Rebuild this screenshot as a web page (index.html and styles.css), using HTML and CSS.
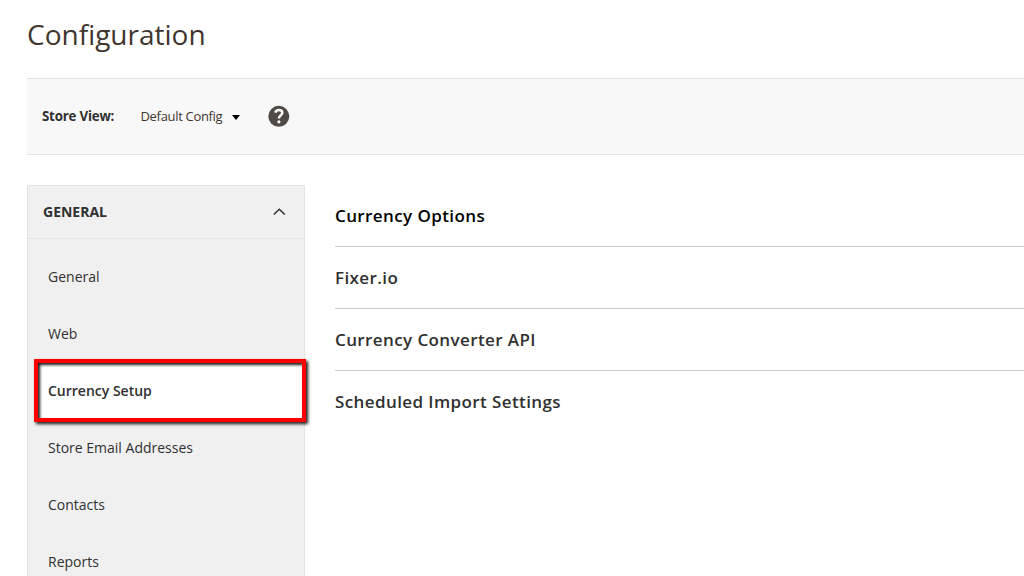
FILE: index.html
```html
<!DOCTYPE html>
<html lang="en">
<head>
    <meta charset="UTF-8">
    <meta name="viewport" content="width=device-width, initial-scale=1.0">
    <title>Configuration</title>
    <link rel="stylesheet" href="styles.css">
</head>
<body>
    <div class="page">
        <h1 class="page-title">Configuration</h1>

        <div class="toolbar">
            <span class="store-label">Store View:</span>
            <button type="button" class="store-select">
                <span class="store-name">Default Config</span>
                <svg class="caret" width="8" height="5" viewBox="0 0 8 5"><path d="M0 0h8L4 5z" fill="#000"/></svg>
            </button>
            <a href="#" class="help" aria-label="Help">
                <svg width="22" height="22" viewBox="0 0 22 22">
                    <circle cx="10.800" cy="11.300" r="10.500" fill="#514943"/>
                    <path d="M7.300 7.600C7.800 5.600 9.100 4.900 11 4.900C13.200 4.900 14.300 6.200 14.300 7.800C14.300 10.400 10.900 10.500 10.900 13.500" fill="none" stroke="#fff" stroke-width="2.500"/>
                    <circle cx="10.900" cy="16.800" r="1.600" fill="#fff"/>
                </svg>
            </a>
        </div>

        <div class="columns">
            <nav class="sidebar">
                <div class="sidebar-title">
                    <span>General</span>
                    <svg width="14" height="9" viewBox="0 0 14 9"><path d="M1.800 7.500L7.300 2.300L12.800 7.500" fill="none" stroke="#303030" stroke-width="1.500"/></svg>
                </div>
                <ul class="sidebar-items">
                    <li><a href="#">General</a></li>
                    <li><a href="#">Web</a></li>
                    <li class="active"><a href="#">Currency Setup</a></li>
                    <li><a href="#">Store Email Addresses</a></li>
                    <li><a href="#">Contacts</a></li>
                    <li><a href="#">Reports</a></li>
                </ul>
            </nav>

            <main class="sections">
                <h2 class="section current">Currency Options</h2>
                <h2 class="section">Fixer.io</h2>
                <h2 class="section">Currency Converter API</h2>
                <h2 class="section">Scheduled Import Settings</h2>
            </main>
        </div>
    </div>
</body>
</html>
```

FILE: styles.css
```css
* {
    margin: 0;
    padding: 0;
    box-sizing: border-box;
}

body {
    font-family: 'Open Sans', 'Noto Sans', sans-serif;
    font-size: 14px;
    color: #303030;
    background: #fff;
    height: 100vh;
    overflow: hidden;
}

a {
    color: inherit;
    text-decoration: none;
}

.page {
    display: flex;
    flex-direction: column;
    height: 100vh;
    padding-left: 27px;
}

.page-title {
    flex: none;
    height: 78px;
    padding-top: 15px;
    font-size: 28px;
    font-weight: 400;
    line-height: 38px;
    color: #41362f;
}

.toolbar {
    display: flex;
    flex: none;
    align-items: center;
    height: 77px;
    padding: 0 0 2px 15px;
    background: #f8f8f8;
    border-top: 1px solid #e3e3e3;
    border-bottom: 1px solid #e3e3e3;
}

.store-label {
    width: 98px;
    font-weight: 700;
    font-size: 13.3px;
    letter-spacing: -0.2px;
}

.store-select {
    display: flex;
    align-items: center;
    width: 128px;
    border: none;
    background: none;
    font-family: inherit;
    font-size: 13px;
    letter-spacing: -0.32px;
    color: #41362f;
}

.store-name {
    width: 92px;
    padding-left: 0.5px;
    text-align: left;
    white-space: nowrap;
}

.caret {
    margin-top: 4px;
}

.help {
    display: flex;
}

.columns {
    display: flex;
    flex: 1;
    gap: 30px;
    min-height: 0;
    margin-top: 30px;
}

.sidebar {
    width: 278px;
    background: #f0f0f0;
    border: 1px solid #e3e3e3;
    border-bottom: none;
}

.sidebar-title {
    display: flex;
    align-items: center;
    justify-content: space-between;
    height: 53px;
    padding: 0 18px 1px 15px;
    border-bottom: 1px solid #e3e3e3;
    font-weight: 700;
    text-transform: uppercase;
}

.sidebar-items {
    list-style: none;
    padding-top: 9px;
}

.sidebar-items li {
    height: 57px;
    padding-left: 20px;
    line-height: 57px;
}

.sidebar-items li:last-child {
    height: 43px;
}

.sidebar-items .active {
    width: 272px;
    height: 63px;
    margin: -3px 0 -3px 6px;
    padding-left: 10px;
    line-height: 55px;
    font-weight: 600;
    background: #fff;
    border: 4px solid #f00;
    position: relative;
    box-shadow: 2px 2px 3px rgba(0, 0, 0, 0.9), inset 2px 2px 3px rgba(0, 0, 0, 0.9);
}

.sections {
    flex: 1;
}

.section {
    height: 62px;
    border-bottom: 1px solid #ccc;
    font-size: 17px;
    font-weight: 600;
    line-height: 61px;
    letter-spacing: 0.4px;
}

.section.current {
    color: #000;
}

.section:last-child {
    border-bottom: none;
}
```
